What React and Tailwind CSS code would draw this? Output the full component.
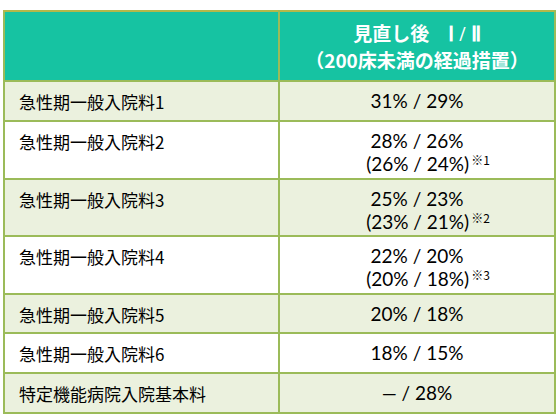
import React from 'react';

const rows = [
  {name: '急性期一般入院料1', main: '31% / 29%', h: 'h-[40px]', alt: true},
  {name: '急性期一般入院料2', main: '28% / 26%', sub: '(26% / 24%)', note: '※1', h: 'h-[58px]'},
  {name: '急性期一般入院料3', main: '25% / 23%', sub: '(23% / 21%)', note: '※2', h: 'h-[57px]', alt: true},
  {name: '急性期一般入院料4', main: '22% / 20%', sub: '(20% / 18%)', note: '※3', h: 'h-[58px]'},
  {name: '急性期一般入院料5', main: '20% / 18%', h: 'h-[39px]', alt: true},
  {name: '急性期一般入院料6', main: '18% / 15%', h: 'h-[40px]'},
  {name: '特定機能病院入院基本料', main: '— / 28%', h: 'h-[40px]', alt: true},
];

const App = () => {
  return (
    <div className="w-[560px] h-[420px] bg-white pt-[10px] pl-[3px]">
      <table
        className="w-[553px] border-collapse border-2 border-[#9bbb59] text-black"
        style={{fontFamily: '"Noto Sans CJK JP", "Noto Sans", sans-serif'}}>
        <tbody>
          <tr className="h-[70px] bg-[#16c3a2]">
            <td className="w-[275px] border-2 border-[#9bbb59] border-t-[#b3b84a]"></td>
            <td className="border-2 border-[#9bbb59] border-t-[#b3b84a] text-center align-middle text-white font-bold text-[19px] leading-[25px]">
              <div>
                見直し後　<span className="font-['Liberation_Serif'] text-[21px]">Ⅰ / Ⅱ</span>
              </div>
              <div>（200床未満の経過措置）</div>
            </td>
          </tr>
          {rows.map((r, i) => (
            <tr key={i} className={`${r.h} ${r.alt ? 'bg-[#ebf1de]' : 'bg-white'}`}>
              <td className="border-2 border-[#9bbb59] align-top pl-[14px] pt-[8px] text-[17px] leading-[23px]">
                {r.name}
              </td>
              <td className="border-2 border-[#9bbb59] align-top text-center pt-[7px] font-['Lato','Noto_Sans_CJK_JP',sans-serif] text-[19px] leading-[24px]">
                <div>{r.main}</div>
                {r.sub && (
                  <div className="pl-[22px] leading-[22px]">
                    {r.sub}
                    <span className="ml-[2px] font-['Noto_Sans_CJK_JP',sans-serif] text-[12px] leading-none align-[6px]">{r.note}</span>
                  </div>
                )}
              </td>
            </tr>
          ))}
        </tbody>
      </table>
    </div>
  );
};

export default App;
